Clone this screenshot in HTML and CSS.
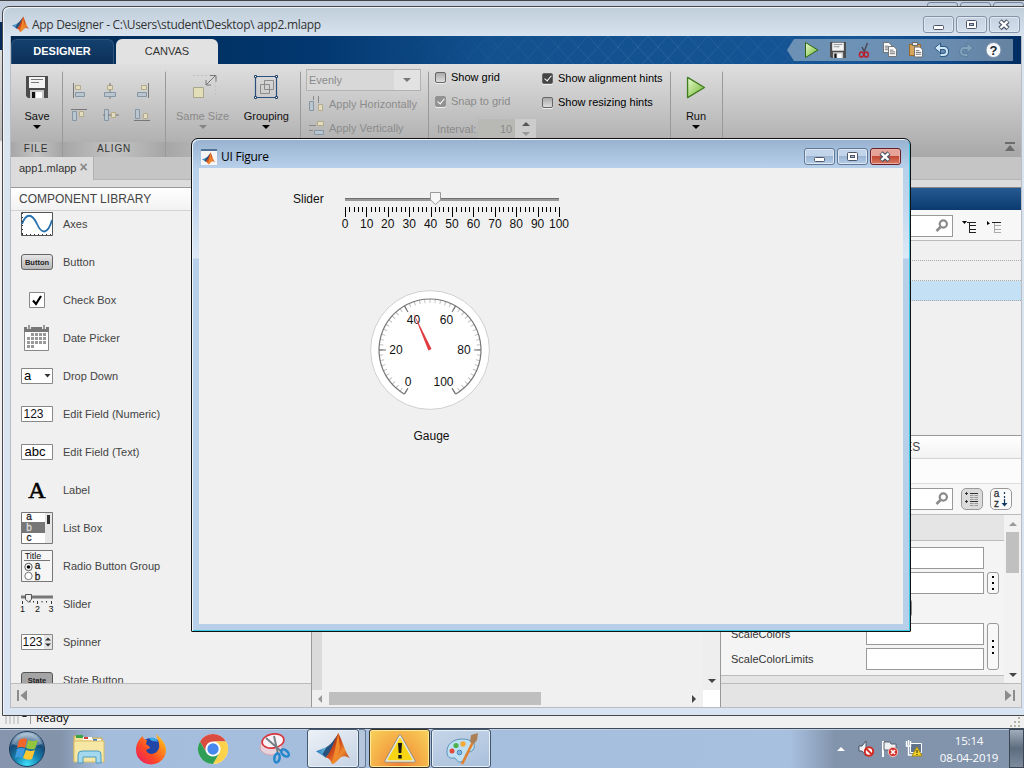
FILE: index.html
```html
<!DOCTYPE html>
<html lang="en">
<head>
<meta charset="utf-8">
<title>App Designer</title>
<link rel="stylesheet" href="styles.css">
</head>
<body>
<svg class="defs" width="0" height="0" aria-hidden="true">
  <defs>
    <linearGradient id="gOrange" x1="0" y1="0" x2="1" y2="1"><stop offset="0" stop-color="#7a1f10"/><stop offset=".45" stop-color="#d04a1c"/><stop offset=".65" stop-color="#ee8a30"/><stop offset="1" stop-color="#a32a12"/></linearGradient>
    <linearGradient id="gBlue" x1="0" y1="0" x2="1" y2="0"><stop offset="0" stop-color="#2b74b8"/><stop offset=".6" stop-color="#5fb0d8"/><stop offset="1" stop-color="#234a78"/></linearGradient>
    <linearGradient id="gPlay" x1="0" y1="0" x2="1" y2="1"><stop offset="0" stop-color="#eafad0"/><stop offset="1" stop-color="#6cb62a"/></linearGradient>
    <linearGradient id="gSilver" x1="0" y1="0" x2="0" y2="1"><stop offset="0" stop-color="#e8e8e8"/><stop offset="1" stop-color="#b4b4b4"/></linearGradient>
    <radialGradient id="gOrb" cx=".5" cy=".95" r=".9"><stop offset="0" stop-color="#3fe0fa"/><stop offset=".4" stop-color="#1583b0"/><stop offset=".75" stop-color="#174a78"/><stop offset="1" stop-color="#9fb6cc"/></radialGradient>
    <linearGradient id="gFire" x1="0" y1="1" x2="1" y2="0"><stop offset="0" stop-color="#e5156b"/><stop offset=".4" stop-color="#ff4a25"/><stop offset=".75" stop-color="#ff9a1b"/><stop offset="1" stop-color="#ffe83a"/></linearGradient>
    <symbol id="matlab" viewBox="0 0 32 32">
      <path d="M0 18 L10 14 L14 18 L9 24 Z" fill="url(#gBlue)"/>
      <path d="M10 14 C14 12 17 7 20 3 L17 15 L9 24 L6 21 Z" fill="#28527e"/>
      <path d="M9 24 C14 20 17 8 21 1 C25 9 28 20 32 25 C28 22 25 22 22 25 C19 28 18 30 15 30 C14 27 12 24 9 24 Z" fill="url(#gOrange)"/>
      <path d="M15 30 C17 22 19 10 21 1 L22.500 14 L20 26 Z" fill="#f08a2a"/>
    </symbol>
    <symbol id="play" viewBox="0 0 20 24"><path d="M1.2 1.5 L18.8 12 L1.2 22.5 Z" fill="url(#gPlay)" stroke="#3e7a1e" stroke-width="1.4" stroke-linejoin="round"/></symbol>
    <symbol id="floppy" viewBox="0 0 22 22">
      <path d="M0 0H22V22H2L0 20Z" fill="#4c4c4c"/><path d="M3 1H19V12H3Z" fill="#f4f4f4"/>
      <path d="M5 3.5H17M5 6.5H13" stroke="#777"/><path d="M4 14H18V22H4Z" fill="#c8c8c8"/><path d="M6 16H9V22H6Z" fill="#111"/><path d="M10 16H16V22H10Z" fill="#fff"/>
    </symbol>
    <symbol id="lens" viewBox="0 0 14 14"><circle cx="8.300" cy="5" r="3.600" fill="none" stroke="#8a8a8a" stroke-width="2.200"/><path d="M5.500 8 L1.500 12" stroke="#8a8a8a" stroke-width="2.600"/></symbol>
    <symbol id="page" viewBox="0 0 10 12"><path d="M.5 .5H6.5L9.5 3.5V11.5H.5Z" fill="#fff" stroke="#666"/><path d="M2 4.5H6M2 6.5H8M2 8.5H8" stroke="#666"/></symbol>
    <symbol id="min" viewBox="0 0 14 12"><rect x="1.500" y="6.500" width="10" height="4" rx="1" fill="#fff" stroke="#4d5566"/></symbol>
    <symbol id="max" viewBox="0 0 14 12"><rect x="1.500" y="1.500" width="10" height="8" rx="1" fill="#fff" stroke="#4d5566"/><rect x="4.500" y="4.500" width="4" height="2" fill="#a9bdd6" stroke="#4d5566"/></symbol>
    <symbol id="cls" viewBox="0 0 14 12"><path d="M2 2L10 9.500M10 2L2 9.500" stroke="#4d5566" stroke-width="4.600"/><path d="M2.500 2.400L9.500 9M9.500 2.400L2.500 9" stroke="#fff" stroke-width="2.400"/></symbol>
  </defs>
</svg>

<div class="desktop">
  <div class="backwin">
    <div class="back-title"><span></span><span></span><span></span></div>
    <div class="back-band"></div>
    <div class="back-body"></div>
    <div class="back-status">
      <svg width="24" height="11" viewBox="0 0 24 11"><path d="M1 0h2v8H1zM5 0h2v8H5zM9 0h2v8H9zM13 0h2v8h-2z" fill="#d0d0d0"/><path d="M18 1l2.500-3 2.500 3z" fill="#222"/></svg>
      <span class="ready">Ready</span>
      <svg class="grip" width="14" height="12" viewBox="0 0 14 12"><path d="M8 1h2v2H8zM4 5h2v2H4zM8 5h2v2H8zM0 9h2v2H0zM4 9h2v2H4zM8 9h2v2H8z" fill="#b8b4a2"/></svg>
    </div>
  </div>

  <section class="appwin">
    <header class="titlebar">
      <svg width="17" height="17"><use href="#matlab"/></svg>
      <span class="title">App Designer - C:\Users\student\Desktop\ app2.mlapp</span>
      <div class="winbtns">
        <i><svg width="14" height="12"><use href="#min"/></svg></i>
        <i><svg width="14" height="12"><use href="#max"/></svg></i>
        <i><svg width="14" height="12"><use href="#cls"/></svg></i>
      </div>
    </header>
    <div class="client">
      <nav class="tabs">
        <span class="tab dark">DESIGNER</span><span class="tab light">CANVAS</span>
        <svg class="lattice" width="520" height="28"><defs><pattern id="lat" width="20" height="22" patternUnits="userSpaceOnUse"><path d="M0 0L20 22M20 0L0 22" stroke="#4d7fb5" stroke-opacity=".45" fill="none"/></pattern></defs><rect width="520" height="28" fill="url(#lat)"/></svg>
        <div class="quick">
          <svg width="226" height="22" viewBox="0 0 226 22">
            <path d="M0 11L7 0H226V22H7Z" fill="#a9bac9" fill-opacity=".6"/>
            <path d="M18.500 3.500L31 11L18.500 18.500Z" fill="url(#gPlay)" stroke="#2d6414"/>
            <use href="#floppy" x="43" y="3" width="16" height="16"/>
            <path d="M80.500 4L77 13M75 8L78 14" stroke="#4a4a55" stroke-width="1.500"/><g fill="none" stroke="#bb1e2b" stroke-width="1.500"><ellipse cx="74.500" cy="15.500" rx="2" ry="2.600"/><ellipse cx="79.300" cy="15.500" rx="2" ry="2.600"/></g>
            <use href="#page" x="96" y="3" width="9" height="11"/><use href="#page" x="101" y="7" width="9" height="11"/>
            <path d="M122.500 5.500h11v11h-11z" fill="#d4a55b" stroke="#96692a"/><path d="M125.500 3.500h5v3h-5z" fill="#eee" stroke="#666"/><use href="#page" x="127" y="7" width="9" height="12"/>
            <path d="M151 9H157Q160 9 160 12.500T156 16H153" fill="none" stroke="#2b5a83" stroke-width="4"/><path d="M147.500 9l6-5v10z" fill="#cfe6f7" stroke="#2b5a83"/><path d="M151 9H157Q160 9 160 12.500T156 16H153.500" fill="none" stroke="#cfe6f7" stroke-width="2"/>
            <g fill="none"><path d="M181 9H177Q174 9 174 12.500T178 16H181" stroke="#587f9f" stroke-width="3.600"/><path d="M186 9l-6-5v10z" fill="#84a3bd" stroke="#587f9f"/><path d="M182 9H177Q174 9 174 12.500T178 16H180.500" stroke="#84a3bd" stroke-width="1.800"/></g>
            <circle cx="206.500" cy="11" r="7.500" fill="#f6f9fc" stroke="#7890a8"/><text x="206.500" y="15.500" class="q">?</text>
          </svg>
        </div>
      </nav>

      <div class="ribbon">
        <div class="sec file"><div class="cmd"><svg width="22" height="22"><use href="#floppy"/></svg><b>Save</b><i class="dn"></i></div><h4>FILE</h4></div>
        <div class="sec align"><div class="alignbox">
          <svg width="80" height="46" viewBox="0 0 80 46"><g fill="#e2ddc2" stroke="#b4ab85"><path d="M3.500 3.500h5v4h-5zM35.500 3.500h5v4h-5zM69.500 3.500h5v4h-5zM7.500 29.500h4v5h-4zM39.500 30.500h4v5h-4zM71.500 31.500h4v5h-4z"/></g><g fill="#b9c6d0" stroke="#8796a3"><path d="M3.500 10.500h9v4h-9zM32.500 10.500h11v4h-11zM65.500 10.500h9v4h-9zM.500 29.500h4v9h-4zM32.500 27.500h4v11h-4zM63.500 27.500h4v9h-4z"/></g><path d="M1.500 1v15M38 1v3M38 8v2M38 15v2M76.500 1v15M-1 27.500h16M31 33h2M36 33h3M44 33h3M62 38.500h16" stroke="#777" fill="none"/></svg>
        </div><h4>ALIGN</h4></div>
        <div class="sec arrange"><div class="pair">
          <div class="cmd off"><svg width="28" height="28" viewBox="0 0 28 28"><path d="M4.500 14.500h10v10h-10z" fill="#e2deb8" stroke="#aaa68b"/><path d="M4 2.500h22.500V24" stroke="#c2c2c2" stroke-dasharray="2 2" fill="none"/><path d="M17 12L27 2M21 2.500h6v6M17 7v5h5" stroke="#777" fill="none"/></svg><b>Same Size</b><i class="dn"></i></div>
          <div class="cmd"><svg width="28" height="28" viewBox="0 0 28 28"><path d="M3.500 3.500h21v21h-21z" fill="none" stroke="#2c4f80" stroke-width="1.200"/><path d="M12.500 7.500h9v9h-9zM8.500 11.500h9v9h-9z" fill="none" stroke="#8c8c8c"/><g fill="#fff" stroke="#24436e"><path d="M2.500 2.500h2v2h-2zM23.500 2.500h2v2h-2zM2.500 23.500h2v2h-2zM23.500 23.500h2v2h-2z"/></g></svg><b>Grouping</b><i class="dn"></i></div>
        </div><h4>&nbsp;</h4></div>
        <div class="sec space"><div class="stack">
          <div class="select"><span>Evenly</span><em><i class="dn"></i></em></div>
          <div class="line"><svg width="15" height="16" viewBox="0 0 15 16"><path d="M.500 5.500h4v9h-4z" fill="#b9c6d0" stroke="#8796a3"/><path d="M9.500 8.500h4v6h-4z" fill="#e2ddc2" stroke="#b4ab85"/><path d="M4.500 0v4M9.500 0v7" stroke="#888"/></svg>Apply Horizontally</div>
          <div class="line"><svg width="15" height="16" viewBox="0 0 15 16"><path d="M8.500 1.500h6v4h-6z" fill="#e2ddc2" stroke="#b4ab85"/><path d="M5.500 10.500h9v4h-9z" fill="#b9c6d0" stroke="#8796a3"/><path d="M0 5.500h7M0 10.500h4" stroke="#888"/></svg>Apply Vertically</div>
        </div></div>
        <div class="sec view">
          <div class="col">
            <label><i class="cb"></i>Show grid</label>
            <label class="off"><i class="cb ck"></i>Snap to grid</label>
            <label class="off interval">Interval:<span class="num">10</span><span class="spin"><i class="up"></i><i class="dn"></i></span></label>
          </div>
          <div class="col two">
            <label><i class="cb ck"></i>Show alignment hints</label>
            <label><i class="cb"></i>Show resizing hints</label>
          </div>
        </div>
        <div class="sec run"><div class="cmd"><svg width="20" height="23"><use href="#play"/></svg><b>Run</b><i class="dn"></i></div></div>
        <div class="fill"><svg width="12" height="12" viewBox="0 0 12 12"><path d="M1 1h10v2H1zM6 4l5 6H1z" fill="#6c6c6c"/></svg></div>
      </div>

      <div class="doctabs"><span>app1.mlapp <b>×</b></span></div>

      <div class="work">
        <aside class="library">
          <h3>COMPONENT LIBRARY</h3>
          <ul>
            <li><svg width="32" height="24" viewBox="0 0 32 24"><path d="M.500 .500h31v23H.500z" fill="#fff" stroke="#555"/><path d="M1 12C5 1 11 1 16 12S27 22 31 8" fill="none" stroke="#2670ad" stroke-width="1.800"/><path d="M1 22.500H31" stroke="#333" stroke-dasharray="1 3"/><path d="M1.500 1V23" stroke="#333" stroke-dasharray="1 3"/></svg>Axes</li>
            <li><svg width="32" height="16" viewBox="0 0 32 16"><rect x=".500" y=".500" width="31" height="15" rx="2.500" fill="url(#gSilver)" stroke="#666"/><text x="16" y="11" class="t8">Button</text></svg>Button</li>
            <li><svg width="32" height="16" viewBox="0 0 32 16"><path d="M8.500 .500h15v15h-15z" fill="#fff" stroke="#888"/><path d="M12 8.500l3 3.500 5-8" fill="none" stroke="#000" stroke-width="2.200"/></svg>Check Box</li>
            <li><svg width="32" height="28" viewBox="0 0 32 28"><path d="M3.500 3.500h24v23h-24z" fill="#fff" stroke="#888"/><path d="M3 3h25v5H3z" fill="#777"/><path d="M8 0v5M23 0v5" stroke="#eee" stroke-width="4"/><path d="M8 1v4M23 1v4" stroke="#999" stroke-width="2"/><path d="M10 10.500h16M6 14.500h20M6 18.500h20M6 22.500h8" stroke="#999" stroke-width="3" stroke-dasharray="3 1"/></svg>Date Picker</li>
            <li><svg width="32" height="16" viewBox="0 0 32 16"><path d="M.500 .500h31v15H.500z" fill="#fff" stroke="#888"/><text x="6.500" y="12" class="t12">a</text><path d="M23.500 6h6l-3 3.500z" fill="#333"/></svg>Drop Down</li>
            <li><svg width="32" height="16" viewBox="0 0 32 16"><path d="M.500 .500h31v15H.500z" fill="#fff" stroke="#888"/><text x="12.500" y="12" class="t11">123</text></svg>Edit Field (Numeric)</li>
            <li><svg width="32" height="16" viewBox="0 0 32 16"><path d="M.500 .500h31v15H.500z" fill="#fff" stroke="#888"/><text x="14" y="12" class="t12">abc</text></svg>Edit Field (Text)</li>
            <li><svg width="32" height="24" viewBox="0 0 32 24"><text x="16" y="20" class="ser">A</text></svg>Label</li>
            <li><svg width="32" height="32" viewBox="0 0 32 32"><path d="M.500 .500h31v31H.500z" fill="#fff" stroke="#777"/><path d="M24 1h7v30h-7z" fill="#e6e6e6"/><path d="M1 10h23v11H1z" fill="#777"/><path d="M26 3h3v9h-3z" fill="#333"/><text x="8" y="8" class="t9">a</text><text x="8" y="19" class="t9 w">b</text><text x="8" y="29" class="t9">c</text></svg>List Box</li>
            <li><svg width="32" height="32" viewBox="0 0 32 32"><path d="M.500 .500h31v31H.500z" fill="#f6f6f6" stroke="#777"/><text x="12" y="9" class="t8n">Title</text><path d="M3 10.500h26" stroke="#777"/><circle cx="7.500" cy="17" r="3.700" fill="#fff" stroke="#555"/><circle cx="7.500" cy="17" r="1.800"/><circle cx="7.500" cy="26" r="3.700" fill="#fff" stroke="#777"/><text x="16.500" y="19" class="t9">a</text><text x="16.500" y="29.500" class="t9">b</text></svg>Radio Button Group</li>
            <li><svg width="32" height="20" viewBox="0 0 32 20"><path d="M0 1.500h32v3H0z" fill="#777"/><path d="M4.500 .500h6v5l-3 2.500-3-2.500z" fill="#eee" stroke="#555"/><path d="M1.500 7v3M16.500 7v3M30.500 7v3M9 7v1.500M12.500 7v1.500M21 7v1.500M25.500 7v1.500" stroke="#333"/><text x="1.500" y="18" class="t8n">1</text><text x="16.500" y="18" class="t8n">2</text><text x="30" y="18" class="t8n">3</text></svg>Slider</li>
            <li><svg width="32" height="16" viewBox="0 0 32 16"><path d="M.500 .500h31v15H.500z" fill="#fff" stroke="#888"/><path d="M23 1h8v14h-8z" fill="#e4e4e4"/><text x="11.500" y="12" class="t11">123</text><path d="M24 6.500l3-3 3 3zM24 9.500l3 3 3-3z" fill="#333"/></svg>Spinner</li>
            <li><svg width="32" height="16" viewBox="0 0 32 16"><rect x=".500" y=".500" width="31" height="15" rx="2.500" fill="#a5a5a5" stroke="#555"/><text x="16" y="11" class="t8">State</text></svg>State Button</li>
          </ul>
          <footer><svg width="12" height="11" viewBox="0 0 12 11"><path d="M1 0h2v11H1zM11 0v11L4.500 5.500z" fill="#8c8c8c"/></svg></footer>
        </aside>

        <main class="canvas">
          <div class="cview"><div class="vbar"><i class="dn"></i></div></div>
          <div class="hbar"><i class="lf"></i><span></span><i class="rt"></i><b></b></div>
        </main>

        <aside class="inspector">
          <div class="blue"></div>
          <div class="searchrow top"><div class="search"><svg width="14" height="14"><use href="#lens"/></svg></div>
            <svg width="15" height="13" viewBox="0 0 15 13"><path d="M0 0h5L2.500 3z"/><path d="M5 1.500h9M7.500 1v11M8 4.500h6M8 8.500h6M8 11.500h6" stroke="#222"/></svg>
            <svg width="15" height="13" viewBox="0 0 15 13"><path d="M0 0l3 2.500L0 4z"/><path d="M5 1.500h9" stroke="#222"/><path d="M7.500 2v10M8 4.500h6M8 8.500h6M8 11.500h6" stroke="#aaa"/></svg></div>
          <div class="tree"><p></p><p></p><p class="sel"></p></div>
          <h3>PROPERTIES</h3>
          <div class="blank"></div>
          <div class="searchrow"><div class="search"><svg width="14" height="14"><use href="#lens"/></svg></div>
            <span class="tgl on"><svg width="16" height="16" viewBox="0 0 16 16"><path d="M2.500 1v3M1 2.500h3M2.500 9v3M1 10.500h3M6 2.500h8M6 10.500h8" stroke="#333"/><path d="M6 4.500h8M6 6.500h8M6 8.500h8M6 12.500h8M6 14.500h8" stroke="#999" stroke-dasharray="3.500 1"/></svg></span>
            <span class="tgl"><svg width="18" height="18" viewBox="0 0 18 18"><text x="4.500" y="7" class="t10">a</text><text x="4.500" y="16.500" class="t10">z</text><path d="M12.500 2v2M12.500 6v2M12.500 9v6" stroke="#123a63" stroke-width="1.200"/><path d="M9.500 13h6l-3 3.500z" fill="#123a63"/></svg></span></div>
          <div class="props">
            <div class="plist">
              <div class="cat"></div>
              <div class="prow"><span></span><div class="inp"></div></div>
              <div class="prow"><span></span><div class="inp"></div><div class="more"><i></i><i></i><i></i></div></div>
              <div class="prow"><span></span><div class="small"></div></div>
              <div class="pgroup"><div><div class="prow"><span>ScaleColors</span><div class="inp"></div></div><div class="prow"><span>ScaleColorLimits</span><div class="inp"></div></div></div><div class="more"><i></i><i></i><i></i></div></div>
              <div class="cat last"></div>
            </div>
            <div class="pbar"><i class="up"></i><span></span><i class="dn"></i></div>
          </div>
          <footer><svg width="12" height="11" viewBox="0 0 12 11"><path d="M9 0h2v11H9zM1 0v11L7.500 5.500z" fill="#8c8c8c"/></svg></footer>
        </aside>
      </div>
    </div>
  </section>

  <section class="figwin">
    <header class="figtitle">
      <span class="figicon"><svg width="13" height="13"><use href="#matlab"/></svg></span>
      <span class="ftitle">UI Figure</span>
      <div class="winbtns">
        <i><svg width="14" height="12"><use href="#min"/></svg></i>
        <i><svg width="14" height="12"><use href="#max"/></svg></i>
        <i class="red"><svg width="14" height="12"><use href="#cls"/></svg></i>
      </div>
    </header>
    <div class="figure">
      <div class="sliderrow"><span>Slider</span>
        <svg width="240" height="40" viewBox="0 0 240 40">
          <path d="M10 6h214v1H10z" fill="#6f6f6f"/><path d="M10 7h214v2H10z" fill="#999"/>
          <path d="M95.500 .500h10v7.500l-5 4.500-5-4.500z" fill="#f7f7f7" stroke="#999"/>
          <path d="M10 17.500H225" stroke="#000" stroke-width="5" stroke-dasharray="1 3.280" shape-rendering="crispEdges"/>
          <path d="M10 20H225" stroke="#000" stroke-width="10" stroke-dasharray="1 20.400" shape-rendering="crispEdges"/>
          <g class="num12"><text x="10" y="36">0</text><text x="31.700" y="36">10</text><text x="52.800" y="36">20</text><text x="74.300" y="36">30</text><text x="95.600" y="36">40</text><text x="117" y="36">50</text><text x="138.400" y="36">60</text><text x="160" y="36">70</text><text x="181.200" y="36">80</text><text x="202.600" y="36">90</text><text x="224" y="36">100</text></g>
        </svg>
      </div>
      <div class="gauge">
        <svg width="122" height="122" viewBox="-61 -61 122 122">
          <circle r="59.400" fill="#fff" stroke="#cfcfcf"/>
          <path d="M-24.500 42.440A49 49 0 1 1 24.500 42.440" pathLength="500" fill="none" stroke="#bbb" stroke-width="4" stroke-dasharray="1.800 8.200" stroke-dashoffset=".900"/>
          <path d="M-23.750 41.140A47.500 47.500 0 1 1 23.750 41.140" pathLength="500" fill="none" stroke="#777" stroke-width="7" stroke-dasharray="2.400 97.600" stroke-dashoffset="1.200"/>
          <path d="M-25.500 44.170A51 51 0 1 1 25.500 44.170" fill="none" stroke="#777" stroke-width="1.200"/>
          <path d="M-25.200 43.700L-22 38.200M25.200 43.700L22 38.200" stroke="#777" stroke-width="1.200"/>
          <g class="num12"><text x="-22" y="36">0</text><text x="-34" y="4">20</text><text x="-16.500" y="-26">40</text><text x="16.500" y="-26">60</text><text x="34" y="4">80</text><text x="13.500" y="36">100</text></g>
          <path d="M-17 -38L1.600 -.900L-1.600 .500Z" fill="#e03c40"/>
        </svg>
        <span>Gauge</span>
      </div>
    </div>
  </section>

  <footer class="taskbar">
    <div class="slot start"><svg width="38" height="38" viewBox="0 0 38 38"><circle cx="19" cy="19" r="17.500" fill="url(#gOrb)" stroke="#1d3d5c"/><path d="M4 14A16 16 0 0 1 34 14Q19 20 4 14Z" fill="#fff" opacity=".3"/><path d="M11 10Q15 7 19 9L17 18Q13 16 9 18Z" fill="#f0662b"/><path d="M20 10Q25 12 30 10L27 19Q23 20 18 18Z" fill="#93c43d"/><path d="M9 19Q13 17 17 19L14 28Q11 26 7 28Z" fill="#3f9be0"/><path d="M18 20Q23 22 27 20L24 29Q20 31 15 28Z" fill="#fcc730"/></svg></div>
    <div class="slot"><svg width="34" height="32" viewBox="0 0 34 32"><path d="M2 3h7l2 2h19v23H2z" fill="#f4e19a" stroke="#c9a94d"/><path d="M4 2h7v3H4z" fill="#3ba447"/><path d="M11 4h9v3h-9z" fill="#fff"/><path d="M12 4h4v2h-4z" fill="#d23f2f"/><path d="M20 6h9v3h-9z" fill="#fff"/><path d="M21 6h4v2h-4z" fill="#3a7fd0"/><path d="M2 8h30v21H2z" fill="#f7e7a4" stroke="#d8bd68"/><path d="M6 30V22Q6 18 10 18H26Q29 18 29 22V30H24V24H11V30Z" fill="#a3d8ee" stroke="#4b9cc2"/></svg></div>
    <div class="slot"><svg width="32" height="32" viewBox="0 0 32 32"><circle cx="16" cy="17" r="12" fill="#2146a8"/><path d="M8 3C3 7 1 12 1 17A15 14.500 0 0 0 31 17C31 11 27 6 21 1C22 6 25 9 24 15C22 22 13 23 11 17L15 15C15 13 12 12 11 11L12 7C9 7 8 5 8 3Z" fill="url(#gFire)"/><path d="M14 5Q20 3 23 9L19 8Q16 9 14 5Z" fill="#3aa6e8"/></svg></div>
    <div class="slot"><svg width="32" height="32" viewBox="-16 -16 32 32"><circle r="15" fill="#fff"/><path d="M-13 -7.500A15 15 0 0 1 13 -7.500H0A7.500 7.500 0 0 0 -6.500 3.750Z" fill="#d94c3f"/><path d="M13 -7.500A15 15 0 0 1 0 15L6.500 3.750A7.500 7.500 0 0 0 0 -7.500Z" fill="#fcd24b"/><path d="M0 15A15 15 0 0 1 -13 -7.500L-6.500 3.750A7.500 7.500 0 0 0 6.500 3.750Z" fill="#2f9e56"/><circle r="7" fill="#fff"/><circle r="5.700" fill="#4688ee"/></svg></div>
    <div class="slot snip"><svg width="34" height="34" viewBox="0 0 34 34"><ellipse cx="14" cy="15" rx="11" ry="8" fill="#e8d3dc" stroke="#d9a3b0"/><ellipse cx="16" cy="9" rx="11" ry="7" fill="#f7f3f6" stroke="#d8353d" stroke-width="1.600" transform="rotate(-10 16 9)"/><path d="M9 6L25 20M17 4L21 22" stroke="#777f87" stroke-width="2"/><ellipse cx="20" cy="26" rx="2.600" ry="4.500" fill="none" stroke="#2486cc" stroke-width="2.500" transform="rotate(10 20 26)"/><ellipse cx="28" cy="21" rx="2.600" ry="4.500" fill="none" stroke="#2486cc" stroke-width="2.500" transform="rotate(-50 28 21)"/></svg></div>
    <div class="task first"><svg width="34" height="34"><use href="#matlab"/></svg></div><div class="stackedge"></div>
    <div class="task warn"><svg width="32" height="30" viewBox="0 0 32 30"><path d="M16 2L30 27H2Z" fill="#f8d514" stroke="#8c8c84" stroke-width="3" stroke-linejoin="round"/><path d="M16 2L30 27H2Z" fill="#f8d514" stroke="#e8e8de" stroke-width="1.500" stroke-linejoin="round"/><path d="M14 9h4l-.700 10h-2.600zM14.300 21h3.400v3.400h-3.400z" fill="#151515"/></svg></div>
    <div class="task paint"><svg width="34" height="34" viewBox="0 0 34 34"><path d="M3 21C2 12 10 7 18 7C28 7 33 12 29 18C27 21 23 19 22 22C21 26 23 29 16 30C12 30 13 26 10 26C7 26 4 27 3 21Z" fill="#bfe0f2" stroke="#5c93b8"/><circle cx="8" cy="19" r="2.500" fill="#e2483c"/><circle cx="12" cy="13.500" r="2.600" fill="#4eb150"/><circle cx="19" cy="12" r="2.700" fill="#f5a93a"/><circle cx="15.500" cy="20.500" r="2.300" fill="#7fb6e2" stroke="#4a87b5"/><path d="M18 32L29 10" stroke="#e2812d" stroke-width="2.600"/><path d="M26 10L27 3L34 1L33 8L30 12Z" fill="#a98057"/></svg></div>
    <div class="tray">
      <svg width="10" height="6" viewBox="0 0 10 6"><path d="M1 5L5 1l4 4z" fill="#fff"/></svg>
      <svg width="18" height="18" viewBox="0 0 18 18"><path d="M2 6h3l4-5v15l-4-5H2z" fill="#eef2f6" stroke="#4b5563"/><circle cx="12" cy="11.500" r="4.200" fill="#fff" stroke="#d42a24" stroke-width="2"/><path d="M9 8.500l6 6" stroke="#d42a24" stroke-width="2"/></svg>
      <svg width="18" height="18" viewBox="0 0 18 18"><path d="M2 1v16" stroke="#fff" stroke-width="2"/><path d="M3 2h6l1 2h5v8h-6l-1-2H3z" fill="#eef1f4" stroke="#596372"/><circle cx="12" cy="12" r="4.700" fill="#d6302a" stroke="#f3c6c3"/><path d="M10 10l4 4M14 10l-4 4" stroke="#fff" stroke-width="1.600"/></svg>
      <svg width="18" height="18" viewBox="0 0 18 18"><path d="M5.500 3.500h11v9h-11z" fill="#61758c" stroke="#fff"/><path d="M1.500 1v5h4V1M3.500 0v5M3.500 6v9h5" fill="none" stroke="#fff" stroke-width="1.400"/><path d="M12 7L17 16H7Z" fill="#f5d423" stroke="#a88c12"/><path d="M12 10v3M12 14v1" stroke="#222"/></svg>
      <div class="clock"><span>15:14</span><span>08-04-2019</span></div>
      <div class="peek"></div>
    </div>
  </footer>
</div>
</body>
</html>
```

FILE: styles.css
```css
* { box-sizing: border-box; margin: 0; padding: 0; }
body { width: 1024px; height: 768px; overflow: hidden; font: 11px "Liberation Sans", Arial, sans-serif; color: #333; }
svg { display: block; flex: none; }
i, em { font-style: normal; }
.defs { position: absolute; }
.desktop { position: relative; width: 1024px; height: 768px; overflow: hidden; background: #f0f0f0; }

text { font-family: "Liberation Sans", Arial, sans-serif; text-anchor: middle; }
.t8 { font-size: 7.5px; font-weight: bold; fill: #222; }
.t8n { font-size: 9px; fill: #111; }
.t9 { font-size: 10px; fill: #222; stroke: #222; stroke-width: .3px; }
.t9.w { fill: #ddd; stroke: #ddd; }
.t10 { font-size: 10px; fill: #333; stroke: #333; stroke-width: .3px; }
.t11 { font-size: 12px; fill: #111; }
.t12 { font-size: 13px; fill: #000; }
.ser { font-family: "Liberation Serif", serif; font-size: 24px; stroke: #000; stroke-width: .6px; }
.q { font-size: 13px; font-weight: bold; fill: #1c2733; }
.num12 { font-size: 12px; fill: #111; }

.dn, .up, .lf, .rt { display: block; width: 0; height: 0; border: 4px solid transparent; flex: none; }
.dn { border-top-color: #000; border-bottom: 0; }
.up { border-bottom-color: #555; border-top: 0; }
.lf { border-right-color: #999; border-left: 0; }
.rt { border-left-color: #444; border-right: 0; }

/* window behind */
.backwin { display: flex; flex-direction: column; height: 729px; border-top: 1px solid #444; }
.back-title { height: 21px; background: #c3cfdf; display: flex; justify-content: flex-end; gap: 2px; padding: 1px 0 0; }
.back-title span { width: 31px; height: 10px; border: 1px solid #76839a; border-radius: 3px; }
.back-band { height: 28px; background: #052c5c; }
.back-body { flex: 1; background: linear-gradient(#ddd, #bbb 90px, #f0f0f0 92px); }
.back-status { height: 14px; background: #f0f0f0; display: flex; align-items: flex-start; padding: 1px 0 0 4px; border-bottom: 1px solid #3d4a5e; }
.back-status svg { overflow: visible; }
.ready { margin: -5px 0 0 2px; border-left: 1px solid #999; padding-left: 5px; font: 11.5px/13px "Open Sans", sans-serif; color: #000; }
.grip { margin-left: auto; }

/* main window */
.appwin { position: absolute; left: 2px; top: 6px; width: 1032px; height: 710px; border: 1px solid #484848; border-radius: 7px 7px 0 0; background: linear-gradient(#c0ceda, #d8e4f0 30px, #d8e4f1); padding: 0 13px 0 7px; box-shadow: inset 1px 1px 0 #eef4fa; }
.titlebar { height: 29px; display: flex; align-items: center; padding: 6px 0 0 2px; }
.title { font: 12px/16px "Open Sans", "Noto Sans", sans-serif; letter-spacing: -.31px; color: #333; margin-left: 3px; white-space: nowrap; }
.winbtns { display: flex; gap: 2px; margin-left: auto; }
.winbtns i { width: 31px; height: 17px; border: 1px solid #8592a8; border-radius: 3px; display: flex; align-items: center; justify-content: center; background: linear-gradient(#c6d2df, #d3dfec); box-shadow: inset 0 0 0 1px #dfe7f0; }
.client { width: 1012px; height: 672px; border: solid #b9bdc2; border-width: 0 1px 1px; background: #dcdcdc; display: flex; flex-direction: column; }
.tabs { height: 28px; flex: none; display: flex; align-items: flex-end; background: linear-gradient(90deg, #002850 0, #02376f 300px, #12508e 480px, #165596 850px, #0b4585 940px, #012c60); overflow: hidden; }
.tab { width: 102px; height: 25px; border-radius: 6px 6px 0 0; text-align: center; line-height: 24px; font-size: 11px; }
.tab.dark { width: 103px; background: linear-gradient(#14406e, #0c3058); border: 1px solid #2d557e; border-bottom: 0; color: #fff; font-weight: bold; line-height: 23px; margin-right: 2px; padding-right: 1px; }
.tab.light { background: #e2e2e2; color: #333; }
.lattice { margin-left: 170px; margin-right: -520px; -webkit-mask-image: linear-gradient(90deg, transparent, #000 50%, transparent); mask-image: linear-gradient(90deg, transparent, #000 50%, transparent); opacity: .8; }
.quick { margin: 0 8px 3px auto; }

.ribbon { height: 93px; flex: none; display: flex; background: linear-gradient(#dfdfdf, #a8a8a8); }
.sec { height: 93px; display: flex; flex-direction: column; border-image: linear-gradient(#dcdcdc 8px, #999 9px) 1; border-width: 0 1px 0 0; border-style: solid; }
.sec h4 { margin-top: auto; height: 15px; line-height: 14px; text-align: center; font-weight: normal; font-size: 10px; letter-spacing: .8px; color: #333; background: linear-gradient(90deg, #a6a6a6, #c3c3c3 50%, #a6a6a6); }
.file h4 { padding-right: 1px; }
.file { width: 52px; } .align { width: 103px; } .arrange { width: 135px; } .space { width: 128px; } .view { width: 242px; } .run { width: 52px; }
.cmd { display: flex; flex-direction: column; align-items: center; padding-top: 12px; color: #111; }
.cmd b { font-weight: normal; line-height: 14px; margin-top: 5px; white-space: nowrap; }
.cmd .dn { margin-top: 2px; }
.file .cmd { padding-left: 1px; }
.file .cmd svg { height: 22px; margin-bottom: 6px; }
.run .cmd { padding-right: 1px; }
.run .cmd svg { height: 23px; margin-bottom: 5px; }
.off { color: #8a8a8a; }
.off .dn { border-top-color: #858585; }
.alignbox { padding: 19px 0 0 10px; }
.alignbox svg { overflow: visible; margin: -1px 0 0 -1px; }
.pair { display: flex; justify-content: space-between; padding: 0 11px 0 10px; }
.pair .cmd { padding-top: 9px; }
.pair .cmd b { margin-top: 8px; }
.pair .cmd svg { height: 28px; }
.stack { padding: 5px 7px 0 5px; color: #8c8c8c; }
.select { height: 22px; border: 1px solid #b3b3ae; display: flex; align-items: center; padding-left: 2px; background: #d8d8d8; margin-bottom: 5px; }
.select em { margin-left: auto; width: 26px; height: 20px; background: #e2e2e2; display: flex; align-items: center; justify-content: center; }
.select .dn { border-top-color: #777; }
.line { display: flex; align-items: center; gap: 5px; height: 16px; margin: 0 0 8px 3px; white-space: nowrap; }
.view { flex-direction: row; color: #000; padding: 6px 0 0 6px; }
.col { width: 107px; display: flex; flex-direction: column; gap: 10px; }
.col.two { width: 128px; padding-top: 1px; gap: 10px; }
.col label { display: flex; align-items: center; gap: 6px; height: 14px; white-space: nowrap; }
.col .off { color: #8a8a8a; }
.cb { width: 11px; height: 11px; border: 1.5px solid #666; border-radius: 2px; background: linear-gradient(#aaa, #ddd); display: block; box-shadow: 0 1px 0 #eee; margin-right: -1px; }
.cb.ck { background: #444; position: relative; }
.cb.ck::after { content: ""; position: absolute; left: 3px; top: 0; width: 3px; height: 6px; border: solid #fff; border-width: 0 1.5px 1.5px 0; transform: rotate(40deg); }
.off .cb.ck { background: #929292; border-color: #929292; }
.col .interval { padding: 0 0 0 2px; height: 20px; gap: 2px; margin-top: 1px; }
.num { width: 37px; text-align: right; padding-right: 3px; line-height: 20px; background: #b8b8b5; }
.spin { width: 21px; height: 20px; background: #ccc; display: flex; flex-direction: column; justify-content: space-between; align-items: center; padding: 3px 0; margin-left: -2px; flex: none; }
.spin .dn { border-top-color: #999; }
.fill { flex: 1; display: flex; align-items: flex-end; justify-content: flex-end; padding: 0 5px 4px 0; }

.doctabs { height: 23px; flex: none; background: #c5c5c5; border-bottom: 1px solid #b5b5b5; display: flex; }
.doctabs span { width: 83px; height: 23px; line-height: 22px; background: #dcdcdc; border-right: 1px solid #b0b0b0; padding-left: 8px; white-space: nowrap; }
.doctabs b { color: #888; font-size: 14px; line-height: 12px; }
.work { flex: 1; min-height: 0; display: flex; padding-top: 7px; }
.library { width: 301px; display: flex; flex-direction: column; border-top: 1px solid #999; border-right: 1px solid #999; background: #f0f0f0; }
h3 { font-weight: normal; font-size: 12px; color: #444; height: 23px; line-height: 22px; padding-left: 8px; background: linear-gradient(#fff, #f2f2f2); border-bottom: 1px solid #d3d3d3; flex: none; }
.library ul { flex: 1; min-height: 0; overflow: hidden; list-style: none; padding: 0 0 0 10px; margin-top: -6px; }
.library li { height: 38px; display: flex; align-items: center; gap: 10px; color: #444; }
.library li svg { overflow: visible; }
.library h3 { position: relative; }
aside footer { height: 24px; flex: none; background: #e4e4e4; border-top: 1px solid #bbb; padding: 6px 5px; }

.canvas { width: 408px; display: flex; flex-direction: column; background: #f0f0f0; }
.cview { flex: 1; border-left: 10px solid #dadada; display: flex; justify-content: flex-end; }
.vbar { width: 17px; display: flex; flex-direction: column; justify-content: flex-end; padding: 0 0 7px 5px; background: #eee; }
.hbar { height: 17px; display: flex; align-items: center; padding-left: 6px; }
.hbar span { width: 212px; height: 13px; background: #bfbfbf; margin: 0 151px 0 7px; }
.hbar b { width: 17px; height: 17px; background: #fff; margin-left: auto; }
.vbar .dn, .pbar .dn { border-top-color: #444; }

.inspector { width: 301px; border-left: 1px solid #999; display: flex; flex-direction: column; background: #f0f0f0; }
.blue { height: 23px; background: linear-gradient(#265a90, #0a3a70); border-top: 1px solid #888; flex: none; }
.searchrow { height: 31px; flex: none; display: flex; align-items: center; padding: 0 9px 0 8px; background: #f7f7f7; border-bottom: 1px solid #bbb; gap: 7px; justify-content: space-between; }
.searchrow.top { padding: 1px 18px 0 8px; }
.search { width: 225px; height: 22px; border: 1px solid #999; background: #fff; display: flex; align-items: center; justify-content: flex-end; padding-right: 3px; }
.searchrow.top .search { width: 224px; }
.searchrow.top > svg { margin: 3px 1px 0 -1px; }
.tree { height: 194px; flex: none; }
.tree p { height: 20px; border-bottom: 1px dotted #aaa; }
.tree p.sel { background: #c3e0f5; }
.inspector h3 { padding-left: 122px; border-top: 1px solid #999; height: 24px; }
.blank { height: 25px; background: #fcfcfc; border-bottom: 1px solid #ddd; flex: none; }
.tgl { width: 22px; height: 22px; border: 1px solid #999; border-radius: 5px; background: #fafafa; display: flex; align-items: center; justify-content: center; }
.tgl.on { background: #dcdcdc; margin-left: 1px; }
.props { flex: 1; min-height: 0; display: flex; overflow: hidden; }
.plist { width: 283px; background: #f4f4f4; }
.cat { height: 26px; background: #e5e5e5; border-bottom: 1px solid #bbb; margin-bottom: 6px; }
.cat.last { margin: 2px 0 0; border-top: 1px solid #bbb; }
.prow { height: 25px; display: flex; align-items: flex-start; }
.prow span { width: 145px; padding-left: 10px; line-height: 22px; flex: none; }
.inp { width: 118px; height: 22px; border: 1px solid #999; background: #fff; flex: none; }
.small { width: 46px; height: 18px; margin-top: 2px; border: 1px solid #888; border-radius: 3px; }
.pgroup { display: flex; margin-top: 1px; }
.more { width: 12px; height: 22px; border: 1px solid #999; border-radius: 3px; margin-left: 3px; display: flex; flex-direction: column; gap: 4px; align-items: center; justify-content: center; background: #f8f8f8; }
.more i { width: 2px; height: 2px; background: #000; }
.pgroup .more { height: 47px; }
.pbar { width: 17px; display: flex; flex-direction: column; align-items: center; padding: 7px 0 6px; background: #f2f2f2; }
.pbar .up { border-bottom-color: #999; }
.pbar span { width: 13px; height: 41px; background: #c0c0c0; margin: 6px 0 auto; }
.inspector footer { display: flex; justify-content: flex-end; }

/* figure window */
.figwin { position: absolute; left: 191px; top: 138px; width: 720px; height: 494px; border: 1px solid #111; border-radius: 7px 7px 1px 1px; background: linear-gradient(#97b1cf, #b8d0ea 29px, #c0d5ec 60px, #dce8f5 119px, #b8cfe9 120px); box-shadow: inset 1px 1px 0 #eef6ff, inset -1px -1px 0 #35cbe5; padding: 0 7px 7px; }
.figtitle { height: 29px; display: flex; align-items: center; padding: 6px 2px 0 2px; }
.figicon { width: 16px; height: 16px; background: #f5f5f5; border-top: 2px solid #4f7196; padding: 1px; }
.ftitle { font: 12px/16px "Open Sans", sans-serif; letter-spacing: -.25px; color: #000; margin-left: 4px; }
.figtitle .winbtns i { border-color: #5f7898; background: linear-gradient(#c1d4e9 45%, #9bb5d3 50%, #b5cde7); }
.figtitle .winbtns i.red { background: linear-gradient(#e6a397 45%, #c24a34 50%, #d97a62); border-color: #6a1f28; box-shadow: inset 0 0 0 1px #e8b0a8; }
.figure { height: 456px; background: #f0f0f0; font-size: 12px; color: #111; }
.sliderrow { display: flex; padding: 24px 0 0 94px; }
.sliderrow span { width: 42px; line-height: 14px; }
.sliderrow svg { overflow: visible; }
.gauge { width: 122px; margin: 57px 0 0 170px; display: flex; flex-direction: column; align-items: center; }
.gauge span { margin-top: 18px; line-height: 14px; padding-left: 3px; }

/* taskbar */
.taskbar { display: flex; height: 39px; background: linear-gradient(90deg, #8796ae 0, #8293aa 60px, #a5bddc 100px, #a8c0df 790px, #8294ac 835px, #8294ac); box-shadow: inset 0 1px 0 #c3d0e0; }
.slot { width: 62px; display: flex; align-items: center; justify-content: center; flex: none; }
.slot.start { width: 58px; padding-right: 4px; }
.slot.snip { width: 63px; padding-right: 4px; }
.task { width: 61px; height: 39px; margin-right: 1px; border: 1px solid #47596f; border-radius: 3px; display: flex; align-items: center; justify-content: center; background: linear-gradient(160deg, #d7e1ed, #b6c9df); box-shadow: inset 0 0 0 1px #e7eff7; flex: none; }
.task.first { width: 52px; margin: 0; background: linear-gradient(150deg, #edf2f7, #c4d2e4); }
.stackedge { width: 7px; border: 1px solid #61758f; border-left: 0; border-radius: 0 3px 3px 0; margin-right: 3px; background: #b5c6dc; flex: none; }
.task.warn { background: radial-gradient(ellipse at 50% 110%, #ed7d34, #f5b149 60%, #f8d45c); border-color: #3a3021; box-shadow: inset 0 0 0 1px #fbe9a0; }
.task.paint { background: linear-gradient(160deg, #c6d5e8, #a9c0dc); width: 60px; }
.tray { margin-left: auto; display: flex; align-items: center; }
.tray svg { margin-right: 6px; }
.tray svg:first-child { margin-right: 11px; }
.clock { width: 64px; margin-left: 8px; display: flex; flex-direction: column; align-items: center; font: 11.5px/17px "Open Sans", sans-serif; letter-spacing: -.15px; color: #fff; white-space: nowrap; }
.peek { width: 15px; height: 39px; margin-left: 8px; border: 1px solid #3c4654; background: linear-gradient(#a0acba, #5d6c7e 50%, #7c8b9d); }
```
